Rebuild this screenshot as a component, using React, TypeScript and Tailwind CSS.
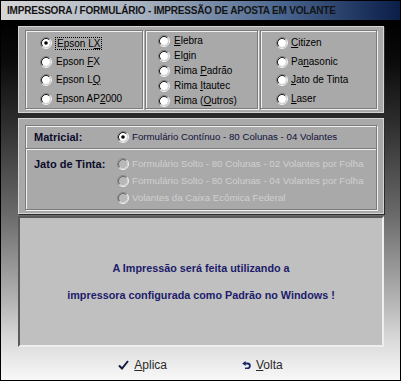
import React from "react";

function Radio({ checked = false, disabled = false }: { checked?: boolean; disabled?: boolean }) {
  return (
    <svg width="12" height="12" viewBox="0 0 12 12" className="shrink-0">
      <circle cx="6" cy="6" r="4" fill={disabled ? "#b8b8b8" : "#fff"} />
      <path d="M2.11 9.89A5.5 5.5 0 0 1 9.89 2.11" fill="none" stroke={disabled ? "#8a8a8a" : "#808080"} />
      <path d="M9.89 2.11A5.5 5.5 0 0 1 2.11 9.89" fill="none" stroke="#f4f4f4" />
      <path d="M2.82 9.18A4.5 4.5 0 0 1 9.18 2.82" fill="none" stroke={disabled ? "#6a6a6a" : "#202020"} />
      <path d="M9.18 2.82A4.5 4.5 0 0 1 2.82 9.18" fill="none" stroke="#d8d8d8" />
      {checked && <circle cx="6" cy="6" r="1.8" fill="#000" />}
    </svg>
  );
}

function Option({ children, checked, gap = "gap-[4px]" }: { children: React.ReactNode; checked?: boolean; gap?: string }) {
  return (
    <div className={"flex items-center h-[14px] " + gap}>
      <Radio checked={checked} />
      <span className="leading-[14px]">{children}</span>
    </div>
  );
}

const group = "border border-[#7c7c7c] shadow-[inset_1px_1px_0_#f0f0f0,1px_1px_0_#f0f0f0]";

export default function App() {
  return (
    <div className="w-[401px] h-[381px] border border-black flex flex-col font-['Liberation_Sans',Arial,sans-serif] text-[10px] text-black overflow-hidden">
      {/* title bar */}
      <div className="h-[19px] shrink-0 flex items-center pl-[6px] bg-[linear-gradient(to_right,#d6d6d6_0%,#a8b2c0_35%,#4a6690_70%,#0a1e48_100%)]">
        <span className="font-bold text-[10px] tracking-[-0.2px] text-[#141414]">
          IMPRESSORA / FORMULÁRIO - IMPRESSÃO DE APOSTA EM VOLANTE
        </span>
      </div>

      <div className="flex-1 flex flex-col bg-[linear-gradient(to_bottom,#000_0%,#0a0a0a_11%,#2c2c2c_28%,#6a6a6a_54%,#b4b4b4_78%,#dadada_89%,#f8f8f8_100%)]">
        {/* impressoras */}
        <div className="mt-[6px] ml-[17px] w-[366px] h-[87px] shrink-0 bg-[#a9a9a9] border border-[#d4d4d4] shadow-[1px_1px_0_#2a2a2a] flex gap-[2px] px-[6px] py-[3px]">
          <div className={group + " w-[118px] flex flex-col gap-[4.5px] pt-[5px] pl-[14px]"}>
            <div className="flex items-center h-[14px] gap-[3px]">
              <Radio checked />
              <span className="leading-[11px] px-[1px] border border-dotted border-black">
                Epson L<u>X</u>
              </span>
            </div>
            <Option>Epson <u>F</u>X</Option>
            <Option>Epson L<u>Q</u></Option>
            <Option>Epson AP<u>2</u>000</Option>
          </div>
          <div className={group + " w-[113px] flex flex-col gap-[1px] pt-[3px] pl-[12px]"}>
            <Option><u>E</u>lebra</Option>
            <Option>El<u>g</u>in</Option>
            <Option>Rima <u>P</u>adrão</Option>
            <Option>Rima <u>I</u>tautec</Option>
            <Option>Rima (<u>O</u>utros)</Option>
          </div>
          <div className={group + " flex-1 flex flex-col gap-[4.5px] pt-[5px] pl-[15px]"}>
            <Option gap="gap-[3px]"><u>C</u>itizen</Option>
            <Option gap="gap-[3px]">Pa<u>n</u>asonic</Option>
            <Option gap="gap-[3px]"><u>J</u>ato de Tinta</Option>
            <Option gap="gap-[3px]"><u>L</u>aser</Option>
          </div>
        </div>

        {/* formularios */}
        <div className="mt-[5px] ml-[17px] w-[366px] h-[96px] shrink-0 bg-[#a9a9a9] border border-[#d4d4d4] shadow-[1px_1px_0_#2a2a2a] px-[6px] pt-[6px] pb-[3px]">
          <div className={group + " h-full flex flex-col"}>
            <div className="h-[22px] flex items-center pl-[8px] pt-[1px]">
              <span className="w-[83px] font-bold text-[11px] text-[#0c0c2c]">Matricial:</span>
              <div className="flex items-center gap-[3px]">
                <Radio checked />
                <span className="text-[9.7px] text-[#10103a]">Formulário Contínuo - 80 Colunas - 04 Volantes</span>
              </div>
            </div>
            <div className="h-[2px] border-t border-[#7c7c7c] border-b border-b-[#f0f0f0]" />
            <div className="flex pl-[8px] pt-[7px]">
              <span className="w-[83px] font-bold text-[11px] text-[#0c0c2c] leading-[14px]">Jato de Tinta:</span>
              <div className="flex flex-col gap-[3px] text-[9.7px] text-[#d0d0d0]">
                <div className="flex items-center h-[14px] gap-[3px]">
                  <Radio disabled />
                  <span>Formulário Solto - 80 Colunas - 02 Volantes por Folha</span>
                </div>
                <div className="flex items-center h-[14px] gap-[3px]">
                  <Radio disabled />
                  <span>Formulário Solto - 80 Colunas - 04 Volantes por Folha</span>
                </div>
                <div className="flex items-center h-[14px] gap-[3px]">
                  <Radio disabled />
                  <span>Volantes da Caixa Ecômica Federal</span>
                </div>
              </div>
            </div>
          </div>
        </div>

        {/* aviso */}
        <div className="mt-[2px] ml-[17px] w-[366px] h-[131px] shrink-0 bg-[#c0c0c0] border-2 border-t-[#5a5a5a] border-l-[#5a5a5a] border-b-[#eeeeee] border-r-[#eeeeee] flex flex-col items-center justify-center gap-[13px] font-bold text-[10.8px] text-[#1c1c6a]">
          <span className="leading-[14px]">A Impressão será feita utilizando a</span>
          <span className="leading-[14px]">impressora configurada como Padrão no Windows !</span>
        </div>

        {/* botoes */}
        <div className="flex-1 flex items-center justify-center gap-[75px] pt-[3px] text-[12px] text-[#2a2a2a]">
          <div className="flex items-center gap-[5px]">
            <svg width="11" height="10" viewBox="0 0 11 10">
              <path d="M1 5.5L4 8.5L10 1" fill="none" stroke="#141a3a" strokeWidth="2" />
            </svg>
            <span><u>A</u>plica</span>
          </div>
          <div className="flex items-center gap-[5px]">
            <svg width="9" height="8" viewBox="0 0 9 8">
              <path d="M3 2.5H5.5A2.4 2.4 0 0 1 5.5 7.3H3" fill="none" stroke="#1a2a6a" strokeWidth="1.8" />
              <path d="M0.2 2.5L3.6 0V5Z" fill="#1a2a6a" />
            </svg>
            <span><u>V</u>olta</span>
          </div>
        </div>
      </div>
    </div>
  );
}
